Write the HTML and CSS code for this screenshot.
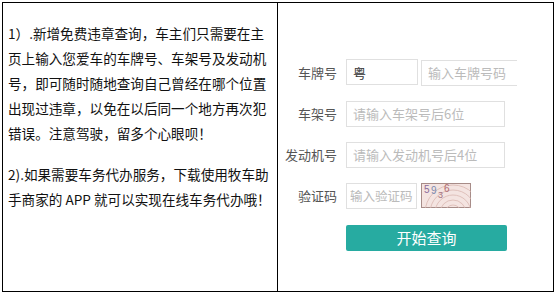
FILE: index.html
```html
<!DOCTYPE html>
<html lang="zh-CN">
<head>
    <meta charset="UTF-8">
    <title>违章查询</title>
    <link rel="stylesheet" href="styles.css">
</head>
<body>
    <table class="info-table">
        <tr>
            <td class="intro-cell">
                <p>1）.新增免费违章查询，车主们只需要在主页上输入您爱车的车牌号、车架号及发动机号，即可随时随地查询自己曾经在哪个位置出现过违章，以免在以后同一个地方再次犯错误。注意驾驶，留多个心眼呗！</p>
                <p>2).如果需要车务代办服务，下载使用牧车助手商家的 APP 就可以实现在线车务代办哦！</p>
            </td>
            <td class="form-cell">
                <div class="query-form">
                    <label class="field-label">车牌号</label>
                    <div class="plate-row">
                        <input type="text" class="field-input plate-prefix" value="粤">
                        <div class="plate-clip">
                            <input type="text" class="field-input plate-number" placeholder="输入车牌号码">
                        </div>
                    </div>

                    <label class="field-label">车架号</label>
                    <input type="text" class="field-input wide" placeholder="请输入车架号后6位">

                    <label class="field-label">发动机号</label>
                    <input type="text" class="field-input wide" placeholder="请输入发动机号后4位">

                    <label class="field-label">验证码</label>
                    <div class="captcha-row">
                        <input type="text" class="field-input code-input" placeholder="输入验证码">
                        <svg class="captcha" width="50" height="25" viewBox="0 0 50 25">
                            <rect x="0.5" y="0.5" width="49" height="24" fill="#f4e4e1" stroke="#a78c88"/>
                            <g fill="none" stroke="#d9b7b1" stroke-width="0.8">
                                <circle cx="32" cy="30" r="8"/>
                                <circle cx="32" cy="30" r="13"/>
                                <circle cx="32" cy="30" r="18"/>
                                <circle cx="32" cy="30" r="23"/>
                                <circle cx="32" cy="30" r="28"/>
                            </g>
                            <text x="3" y="10" font-size="10" fill="#8a6a9a" font-family="Liberation Sans, sans-serif">5</text>
                            <text x="10" y="11" font-size="10" fill="#7a8ab0" font-family="Liberation Sans, sans-serif">9</text>
                            <text x="17" y="15" font-size="9" fill="#a07080" font-family="Liberation Sans, sans-serif">3</text>
                            <text x="23" y="9" font-size="10" fill="#b06a70" font-family="Liberation Sans, sans-serif">6</text>
                        </svg>
                    </div>

                    <span></span>
                    <button class="submit-btn">开始查询</button>
                </div>
            </td>
        </tr>
    </table>
</body>
</html>
```

FILE: styles.css
```css
body {
    margin: 0;
    padding: 2px;
    background: #fff;
    font-family: "Noto Sans CJK SC", sans-serif;
}

.info-table {
    border-collapse: collapse;
    width: 552px;
    height: 290px;
}

.info-table td {
    border: 1px solid #000;
    vertical-align: top;
    padding: 0;
}

.intro-cell {
    width: 269px;
    padding: 18px 0 0 5px !important;
}

.intro-cell p {
    margin: 0 0 16px 0;
    width: 266px;
    font-size: 13.6px;
    line-height: 25px;
    color: #111;
}

.query-form {
    display: grid;
    grid-template-columns: 59px auto;
    column-gap: 9px;
    row-gap: 15px;
    align-items: center;
    padding-top: 56px;
}

.field-label {
    text-align: right;
    font-size: 13px;
    color: #555;
}

.field-input {
    height: 26px;
    box-sizing: border-box;
    border: 1px solid #e0e0e0;
    padding: 0 6px;
    font-family: "Noto Sans CJK SC", sans-serif;
    font-size: 13px;
    color: #333;
    outline: none;
}

.field-input::placeholder {
    color: #bbb;
}

.plate-row {
    display: flex;
    gap: 3px;
}

.plate-prefix {
    width: 72px;
}

.plate-clip {
    width: 96px;
    overflow: hidden;
}

.plate-number {
    width: 120px;
}

.wide {
    width: 159px;
}

.captcha-row {
    display: flex;
    align-items: center;
    gap: 4px;
}

.code-input {
    width: 71px;
    padding: 0 3px;
    font-size: 12.5px;
}

.captcha {
    display: block;
}

.submit-btn {
    width: 161px;
    height: 26px;
    margin-top: 1px;
    background: #27aba1;
    color: #fff;
    border: none;
    border-radius: 2px;
    font-family: "Noto Sans CJK SC", sans-serif;
    font-size: 15px;
    padding: 0;
    cursor: pointer;
}
```
